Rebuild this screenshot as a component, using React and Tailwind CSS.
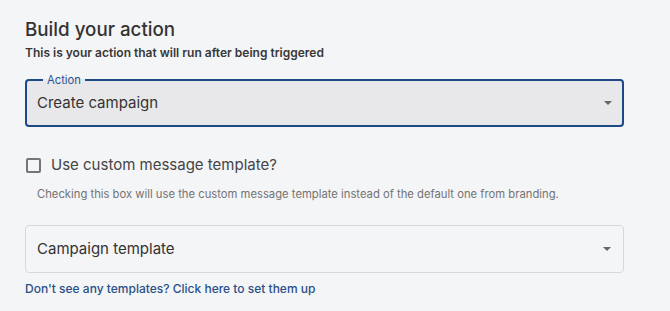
import React, { useState } from 'react';

const Caret = () => (
  <svg width="8" height="4" viewBox="0 0 10 5" className="shrink-0">
    <path d="M0 0L10 0L5 5z" fill="#666" />
  </svg>
);

const App = () => {
  const [custom, setCustom] = useState(false);

  return (
    <div className="min-h-[311px] bg-[#f4f5f7] pl-[25px] pr-[46px] pt-[19px] font-['Inter',sans-serif] text-[#333]">
      {/* Header */}
      <h2 className="text-[18.75px] leading-[22px] font-medium text-[#333]">Build your action</h2>
      <p className="mt-[3px] text-[12px] leading-[17px] font-semibold text-[#383838]">
        This is your action that will run after being triggered
      </p>

      {/* Action select */}
      <fieldset className="mt-[13px] h-[53px] rounded border-2 border-[#1d4a87] bg-[#e8e8ea] px-[10px] flex items-center">
        <legend className="ml-[6px] px-[4px] text-[11.25px] leading-[12px] text-[#2a5394]">Action</legend>
        <div className="flex w-full items-center justify-between -mt-[5px]">
          <span className="text-[15px] text-[#333]">Create campaign</span>
          <Caret />
        </div>
      </fieldset>

      {/* Custom template checkbox */}
      <label className="mt-[28px] flex h-[20px] items-center gap-[10px] pl-[1px] cursor-pointer">
        <input
          type="checkbox"
          checked={custom}
          onChange={(e) => setCustom(e.target.checked)}
          className="appearance-none h-[15px] w-[15px] rounded-[2px] border-2 border-[#757575] bg-transparent"
        />
        <span className="text-[15px] leading-[20px] text-[#444]">Use custom message template?</span>
      </label>
      <p className="mt-[11px] pl-[12px] text-[11.25px] leading-[16px] text-[#737373]">
        Checking this box will use the custom message template instead of the default one from branding.
      </p>

      {/* Campaign template select */}
      <div className="mt-[23px] h-[48px] rounded border border-[#d8d8db] flex items-center justify-between pl-[11px] pr-[12px]">
        <span className="text-[15px] text-[#333]">Campaign template</span>
        <Caret />
      </div>

      <a href="#" className="mt-[7px] block text-[12px] leading-[17px] font-medium text-[#2a4f88]">
        Don't see any templates? Click here to set them up
      </a>
    </div>
  );
};

export default App;
